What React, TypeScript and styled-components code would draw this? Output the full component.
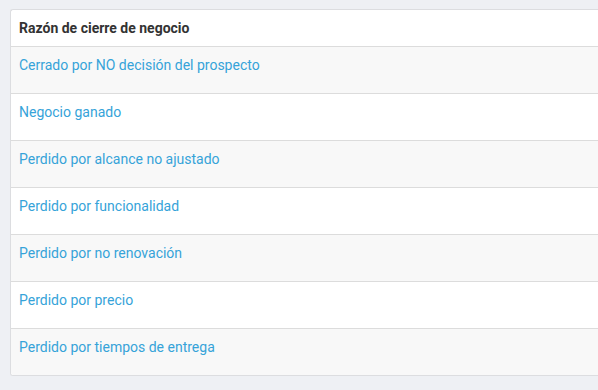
import React from "react";
import styled, { createGlobalStyle } from "styled-components";

const Global = createGlobalStyle`
  html, body { margin: 0; padding: 0; background: #eef0f4; overflow: hidden; }
  body { font-family: Roboto, "Liberation Sans", Arial, sans-serif; }
`;

const Page = styled.div`
  padding: 9px 0 0 10px;
  width: 598px;
  height: 390px;
  box-sizing: border-box;
`;

const Card = styled.div`
  width: 588px;
  box-sizing: border-box;
  background: #fff;
  border: 1px solid #dcdde0;
  border-right: none;
  border-radius: 3px 0 0 3px;
  overflow: hidden;
`;

const Header = styled.div`
  padding: 8px 8px;
  line-height: 20px;
  font-size: 14px;
  font-weight: 700;
  color: #333;
  border-bottom: 1px solid #dcdcdc;
`;

const Row = styled.div<{ $striped: boolean }>`
  height: 47px;
  box-sizing: border-box;
  padding: 8px 8px;
  line-height: 20px;
  font-size: 14px;
  color: #36a3d9;
  background: ${(p) => (p.$striped ? "#f8f8f8" : "#fff")};
  border-bottom: 1px solid #dcdcdc;
  &:last-child { border-bottom: none; height: 46px; }
`;

const items = [
  "Cerrado por NO decisión del prospecto",
  "Negocio ganado",
  "Perdido por alcance no ajustado",
  "Perdido por funcionalidad",
  "Perdido por no renovación",
  "Perdido por precio",
  "Perdido por tiempos de entrega",
];

export default function App() {
  return (
    <>
      <Global />
      <Page>
        <Card>
          <Header>Razón de cierre de negocio</Header>
          {items.map((t, i) => (
            <Row key={t} $striped={i % 2 === 0}>
              {t}
            </Row>
          ))}
        </Card>
      </Page>
    </>
  );
}
